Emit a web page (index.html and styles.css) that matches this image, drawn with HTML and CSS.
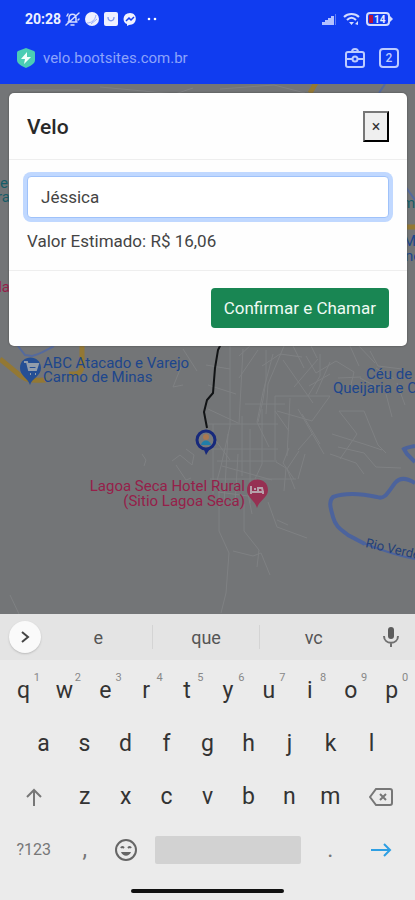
FILE: index.html
```html
<!DOCTYPE html>
<html lang="pt-BR">
<head>
<meta charset="utf-8">
<meta name="viewport" content="width=device-width, initial-scale=1">
<title>Velo</title>
<link rel="stylesheet" href="styles.css">
</head>
<body>
<div class="phone">
  <header class="browser">
    <div class="status">
      <time class="clock">20:28</time>
      <svg class="status-left" width="94" height="16" viewBox="0 0 94 16" aria-hidden="true">
        <g fill="none" stroke="#d5ddff" stroke-width="1.5" stroke-linecap="round">
          <path d="M3 11h9M4 11V7c0-5 7-5 7 0v4M6 14h3M1 14L14 2M2 5l1-2M13 9l1-1"/>
        </g>
        <circle cx="27" cy="8" r="7" fill="#eff1ff"/>
        <path d="M22 12c5 0 8-3 9-8M26 13l6-5" stroke="#9aadf7" stroke-width="1" fill="none"/>
        <rect x="39" y="1" width="14" height="14" rx="2" fill="#eff1ff"/>
        <path d="M43 6c0 5 6 5 6 0" stroke="#8298ee" stroke-width="1.3" fill="none"/>
        <path d="M65 2c-8 0-8 10-3 11v2l2-1c9 0 9-12 1-12z" fill="#eff1ff"/>
        <path d="M61 10l3-3 2 2 3-3" stroke="#123cf0" stroke-width="1.5" fill="none"/>
        <circle cx="84" cy="8" r="1.3" fill="#fff"/><circle cx="90" cy="8" r="1.3" fill="#fff"/>
      </svg>
      <svg class="status-right" width="72" height="16" viewBox="0 0 72 16" aria-hidden="true">
        <path d="M1 14v-2h2v2zM4 14v-4h2v4zM7 14V8h2v6zM10 14V6h2v8z" fill="#d3dcff"/>
        <path d="M1 14v-3h3v3zM4 14v-5h3v5zM7 14V7h3v7zM10 14V5h3v9z" fill="#b3c1ff"/>
        <path d="M14 14V3h1v11z" fill="#5f7cf5"/>
        <g fill="none" stroke="#d3dcff" stroke-width="2">
          <path d="M23 6c4-4 11-4 15 0M26 9c3-3 6-3 9 0"/>
        </g>
        <path d="M28 11h5l-2.500 3zM34 13l3-3v4z" fill="#d3dcff"/>
        <rect x="46" y="2" width="22" height="12" rx="3" fill="none" stroke="#d3dcff" stroke-width="2"/>
        <path d="M69 5l3 3-3 3z" fill="#d3dcff"/>
        <path d="M48 4h4v8h-4z" fill="#b3123f"/>
        <text x="53" y="12" class="battery">14</text>
      </svg>
    </div>
    <div class="address">
      <svg width="20" height="22" viewBox="0 0 20 22" aria-hidden="true">
        <path d="M10 1l8 3c1 1 1 1 1 3v6c0 4-5 6-9 8-4-2-9-4-9-8V7c0-2 0-2 1-3z" fill="#4bcdb4"/>
        <path d="M11 5l-6 7h4l-1 5 7-7h-4z" fill="#f2fffb"/>
      </svg>
      <span class="url">velo.bootsites.com.br</span>
      <button class="tool" aria-label="Ferramentas">
        <svg width="20" height="20" viewBox="0 0 20 20" fill="none" stroke="#bccbff" stroke-width="2" aria-hidden="true">
          <rect x="1" y="4" width="18" height="15" rx="2"/><path d="M7 4q0-3 3-3t3 3M1 11h6M13 11h6"/><circle cx="10" cy="11" r="2.500"/>
        </svg>
      </button>
      <button class="tool tabs" aria-label="Abas abertas">2</button>
    </div>
  </header>

  <main class="page">
    <svg class="map" viewBox="0 0 415 530" preserveAspectRatio="xMidYMin slice" role="img" aria-label="Mapa">
      <rect width="415" height="530" fill="#737577"/>
      <g fill="none" stroke="#7f8183" stroke-width="1">
        <path d="M266 266v30l-3 20-5 22M262 282l18-12 22 3M284 262l-16 38-2 30M273 270l-10 38-6 30 12 25"/>
        <path d="M230 262v80l-9 40-6 22M243 265l-4 75M258 266l-19 28M275 312v64M290 314l-3 58M208 325l30 14M208 340h55M208 346l22 30M242 332v60M262 325v55l-14 30 4 20"/>
        <path d="M275 312h55l-18 25-35-10M275 327l14 20M298 325l26 45M320 270v22l-12 20M339 327h25l14 34 8 8M339 327l18 23-17 25M332 350l35 11 15 5M338 363l26 6 12 14 25 1M330 370l26 9 8 11"/>
        <path d="M302 330l18 30M306 272l10 17 20-12 18 11-5 21M330 278l-14 32M350 262l9 20M357 260l18 19M386 310l6 23M397 299l8 22M370 267l8 15 24 3M360 294l17 9"/>
        <path d="M210 365h68M217 377h60M222 382l50 14M210 395h86M218 408l45 6M276 378l10 6-2 23M289 364l-6 15 11 16M299 367l-12 18 8 20M305 370l-7 25M312 350l-14 16"/>
        <path d="M213 340v70M228 350l-4 70M238 370l-3 50M250 345v74M285 320h-40M278 340h-20M283 276l30 43M318 275l-24 28M330 290l-21 12"/>
        <path d="M252 260l-13 12M310 260l7 14M292 260l12 24M338 294l23-1M376 284l18 11M206 281l24 4M208 301l28 9"/>
        <path d="M219 405v42l10 22-3 40-5 20M244 420v27l15 19-2 17M233 467l20 5 8-3 9 22M268 418l9 25 30 11M277 436l11 5M181 283l-8 20 10-2M142 370l4 6-2 6M172 377l8-6 12 10 2-10-8-6M176 381l10 15 5-2"/>
        <path d="M10 511l9 19M183 265l14 22M20 6h60M100 3l75 7 18-6M220 5l54-4 31 8"/>
      </g>
      <g fill="none" stroke="#937834" stroke-width="5">
        <path d="M0 275l16 13c11 11 19 8 30 8M82 262v19c0 9-5 9-13 9"/>
        <path d="M310 9l7-12M405 143h10"/>
      </g>
      <g fill="none" stroke="#556a9d" stroke-width="2">
        <path d="M18 262l7 9 7 1c9-2 14-6 22-10M379 9l6-9M405 102l10 14"/>
      </g>
      <g fill="none" stroke="#4c639c" stroke-width="4">
        <path d="M415 378l-8-8-3-5c3-2 6-2 11-3"/>
        <path d="M415 399c-8-5-15-6-20 0-7 9-10 17-18 14-14-3-30-5-44 0-5 5-2 12 0 20 3 11 9 13 15 18l17 9"/>
        <path d="M363 459c18 7 34 13 52 16" stroke-width="2"/>
      </g>
      <path d="M222 258l-4 8-3 18-2 25-6 7-3 12 3 16" fill="none" stroke="#111315" stroke-width="2"/>
      <path d="M203 363l3 8 5-8" fill="#17297c"/>
      <circle cx="206" cy="356" r="9" fill="#777a7c" stroke="#17297c" stroke-width="3"/>
      <circle cx="206" cy="353" r="3" fill="#a97851"/>
      <path d="M201 361c1-6 9-6 10 0z" fill="#207da9"/>
      <path d="M30 301c-2-7-10-9-10-17 0-14 21-14 21 0 0 8-9 10-11 17z" fill="#254f94"/>
      <path d="M24 278h3l2 8h7l2-6H28l1 5h7l1-3h-9M30 290h1M35 290h1" stroke="#929dab" stroke-width="2" fill="none"/>
      <path d="M257 424c-2-8-10-10-10-18 0-14 21-14 21 0 0 8-9 10-11 18z" fill="#963052"/>
      <path d="M251 402v8M251 408h12v2M254 405h2M258 408v-4h4l1 4" stroke="#b6a0aa" stroke-width="2" fill="none"/>
      <g class="place blue">
        <text x="43" y="284">ABC Atacado e Varejo</text>
        <text x="43" y="298">Carmo de Minas</text>
        <text x="366" y="295">Céu de</text>
        <text x="333" y="309">Queijaria e C</text>
        <text x="403" y="162">Mu</text>
        <text x="405" y="177">no</text>
      </g>
      <g class="place red">
        <text x="245" y="407" text-anchor="end">Lagoa Seca Hotel Rural</text>
        <text x="245" y="422" text-anchor="end">(Sitio Lagoa Seca)</text>
        <text x="10" y="208" text-anchor="end">la</text>
      </g>
      <g class="place teal">
        <text x="8" y="104" text-anchor="end">e</text>
        <text x="10" y="118" text-anchor="end">ra</text>
        <text x="402" y="124">m</text>
      </g>
      <text class="river" transform="translate(365 463) rotate(13)">Rio Verde</text>
    </svg>

    <form class="modal" role="dialog" aria-labelledby="modal-title">
      <div class="modal-header">
        <h1 id="modal-title">Velo</h1>
        <button type="button" class="close" aria-label="Fechar">×</button>
      </div>
      <div class="modal-body">
        <input type="text" class="name" value="Jéssica" aria-label="Nome">
        <p>Valor Estimado: R$ 16,06</p>
      </div>
      <div class="modal-footer">
        <button type="button" class="confirm">Confirmar e Chamar</button>
      </div>
    </form>
  </main>

  <section class="keyboard" aria-label="Teclado">
    <div class="suggestions">
      <button class="expand" aria-label="Expandir">
        <svg width="12" height="14" viewBox="0 0 12 14" fill="none" stroke="#444" stroke-width="2" aria-hidden="true"><path d="M3 2l6 5-6 5"/></svg>
      </button>
      <button class="word">e</button>
      <button class="word">que</button>
      <button class="word">vc</button>
      <button class="mic" aria-label="Ditado">
        <svg width="16" height="22" viewBox="0 0 16 22" aria-hidden="true">
          <rect x="5" y="1" width="6" height="12" rx="3" fill="#5c5c5c"/>
          <path d="M1 10c0 9 14 9 14 0M8 17v4" fill="none" stroke="#707070" stroke-width="2"/>
        </svg>
      </button>
    </div>
    <div class="keys">
      <div class="row">
        <button class="key">q<sup>1</sup></button><button class="key">w<sup>2</sup></button><button class="key">e<sup>3</sup></button><button class="key">r<sup>4</sup></button><button class="key">t<sup>5</sup></button><button class="key">y<sup>6</sup></button><button class="key">u<sup>7</sup></button><button class="key">i<sup>8</sup></button><button class="key">o<sup>9</sup></button><button class="key">p<sup>0</sup></button>
      </div>
      <div class="row row-home">
        <button class="key">a</button><button class="key">s</button><button class="key">d</button><button class="key">f</button><button class="key">g</button><button class="key">h</button><button class="key">j</button><button class="key">k</button><button class="key">l</button>
      </div>
      <div class="row">
        <button class="key wide" aria-label="Maiúsculas">
          <svg width="18" height="18" viewBox="0 0 18 18" fill="none" stroke="#777" stroke-width="2" aria-hidden="true"><path d="M9 18V2M2 9l7-7 7 7"/></svg>
        </button>
        <button class="key">z</button><button class="key">x</button><button class="key">c</button><button class="key">v</button><button class="key">b</button><button class="key">n</button><button class="key">m</button>
        <button class="key wide" aria-label="Apagar">
          <svg width="24" height="18" viewBox="0 0 24 18" fill="none" stroke="#777" stroke-width="2" aria-hidden="true"><path d="M7 1h14q2 0 2 2v12q0 2-2 2H7L1 9z"/><path d="M11 6l6 6M17 6l-6 6"/></svg>
        </button>
      </div>
      <div class="row row-bottom">
        <button class="key symbols">?123</button>
        <button class="key muted">,</button>
        <button class="key" aria-label="Emoji">
          <svg width="22" height="22" viewBox="0 0 22 22" fill="none" stroke="#666" stroke-width="2" aria-hidden="true"><circle cx="11" cy="11" r="10"/><path d="M6 9q1-2 3 0M13 9q2-2 3 0"/><path d="M6 13h10c-2 5-8 5-10 0z" fill="#666" stroke="none"/></svg>
        </button>
        <button class="space" aria-label="Espaço"></button>
        <button class="key muted">.</button>
        <button class="key" aria-label="Avançar">
          <svg width="22" height="14" viewBox="0 0 22 14" fill="none" stroke="#2e9fe3" stroke-width="2" aria-hidden="true"><path d="M1 7h19M14 1l6 6-6 6"/></svg>
        </button>
      </div>
    </div>
    <div class="home"></div>
  </section>
</div>
</body>
</html>
```
FILE: styles.css
```css
* {
  box-sizing: border-box;
}

body {
  margin: 0;
  font-family: Roboto, "Liberation Sans", sans-serif;
  color: #333;
}

button {
  padding: 0;
  border: 0;
  background: none;
  color: inherit;
  font: inherit;
}

svg {
  display: block;
}

.phone {
  display: flex;
  flex-direction: column;
  min-height: 100vh;
}

.browser {
  padding: 10px 16px 15px;
  background: #103cf0;
  color: #fff;
}

.status {
  display: flex;
  align-items: center;
  gap: 4px;
  height: 18px;
  padding-left: 9px;
}

.clock {
  font-size: 14px;
  font-weight: 700;
  color: #eef1ff;
}

.status-right {
  margin-left: auto;
  margin-right: 6px;
}

.battery {
  fill: #e8edff;
  font-size: 10px;
  font-weight: 700;
}

.address {
  display: flex;
  align-items: center;
  gap: 7px;
  margin-top: 19px;
  height: 22px;
}

.url {
  flex: 1;
  color: #8ca3fb;
  font-size: 15px;
}

.tool {
  width: 20px;
  height: 20px;
  margin-left: 7px;
}

.tabs {
  border: 2px solid #bccbff;
  border-radius: 4px;
  color: #bccbff;
  font-size: 12px;
  font-weight: 500;
  line-height: 16px;
}

.page {
  position: relative;
  flex: 1;
  padding: 9px 8px 9px 9px;
  background: #737577;
  overflow: hidden;
}

.map {
  position: absolute;
  inset: 0;
  width: 100%;
  height: 100%;
}

.place {
  font-size: 15px;
}

.blue {
  fill: #1d468c;
}

.red {
  fill: #96204a;
}

.teal {
  fill: #175d68;
}

.river {
  fill: #233f77;
  font-size: 13px;
}

.modal {
  position: relative;
  border-radius: 5px;
  background: #fefefe;
  box-shadow: 0 0 2px #444;
}

.modal-header {
  display: flex;
  align-items: center;
  justify-content: space-between;
  padding: 18px 18px 17px;
  border-bottom: 1px solid #eee;
}

h1 {
  margin: 0;
  color: #292929;
  font-size: 21px;
  font-weight: 500;
  line-height: 30px;
}

.close {
  width: 26px;
  height: 31px;
  border: 2px outset #767676;
  border-color: #777 #222 #555 #777;
  background: #efefef;
  font-size: 16px;
}

.modal-body {
  padding: 16px 18px 18px;
  border-bottom: 1px solid #eee;
}

.name {
  display: block;
  width: 100%;
  height: 42px;
  padding: 0 13px;
  border: 1px solid #9fc2fa;
  border-radius: 4px;
  outline: 0;
  background: #fff;
  box-shadow: 0 0 0 4px #c0d8ff;
  color: #444;
  font: inherit;
  font-size: 17px;
}

.modal-body p {
  margin: 12px 0 0;
  color: #444;
  font-size: 17px;
  line-height: 22px;
}

.modal-footer {
  display: flex;
  justify-content: flex-end;
  padding: 17px 18px 18px;
}

.confirm {
  height: 40px;
  padding: 0 13px;
  border-radius: 4px;
  background: #198653;
  color: #effaf4;
  font-size: 17px;
}

.keyboard {
  background: #ebebeb;
}

.suggestions {
  display: flex;
  align-items: center;
  height: 46px;
  padding-left: 9px;
  background: #e4e4e4;
}

.expand {
  display: grid;
  place-items: center;
  width: 32px;
  height: 32px;
  margin-right: 4px;
  border-radius: 50%;
  background: #fafafa;
  box-shadow: 0 1px 2px #bbb;
}

.word {
  flex: 1;
  height: 24px;
  color: #555;
  font-size: 18px;
}

.word + .word {
  border-left: 1px solid #d4d4d4;
}

.mic {
  display: grid;
  place-items: center;
  width: 48px;
}

.keys {
  padding: 4px 3px 0;
}

.row {
  display: flex;
  height: 53px;
}

.row-home {
  padding: 0 20px;
}

.row-bottom {
  display: grid;
  grid-template-columns: 3fr 2fr 2fr 8fr 2fr 3fr;
}

.key {
  position: relative;
  display: grid;
  place-items: center;
  flex: 2 1 0;
  font-size: 23px;
}

.key sup {
  position: absolute;
  top: 8px;
  right: 4px;
  color: #888;
  font-size: 11px;
  line-height: 12px;
}

.wide {
  flex-grow: 3;
}

.symbols {
  color: #777;
  font-size: 16px;
}

.muted {
  color: #777;
}

.space {
  align-self: center;
  height: 28px;
  margin: 0 9px;
  border-radius: 2px;
  background: #d2d2d2;
}

.home {
  width: 37%;
  height: 4px;
  margin: 13px auto 7px;
  border-radius: 2px;
  background: #111;
}
```
